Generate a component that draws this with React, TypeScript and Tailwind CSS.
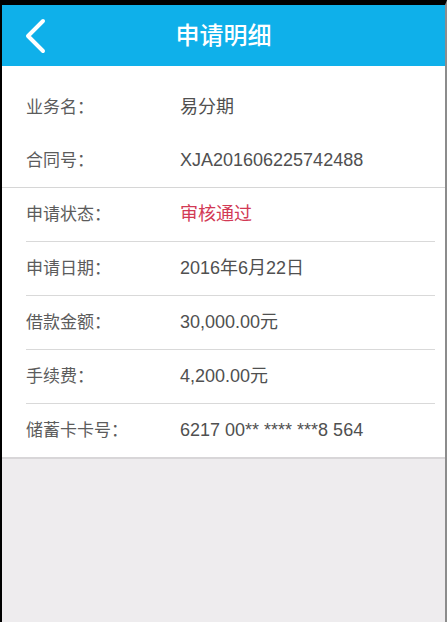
type Row = { label: string; value: string; red?: boolean };

const topRows: Row[] = [
  { label: "业务名：", value: "易分期" },
  { label: "合同号：", value: "XJA201606225742488" },
];

const rows: Row[] = [
  { label: "申请状态：", value: "审核通过", red: true },
  { label: "申请日期：", value: "2016年6月22日" },
  { label: "借款金额：", value: "30,000.00元" },
  { label: "手续费：", value: "4,200.00元" },
  { label: "储蓄卡卡号：", value: "6217 00** **** ***8 564" },
];

function InfoRow({ row }: { row: Row }) {
  return (
    <div className="flex h-[53px] items-center">
      <span className="w-[154px] shrink-0 text-[17px] text-[#5c5c5c]">{row.label}</span>
      <span className={`text-[18px] ${row.red ? "text-[#d23a55]" : "text-[#505050]"}`}>
        {row.value}
      </span>
    </div>
  );
}

export default function App() {
  return (
    <div
      className="flex h-[622px] w-[447px] flex-col border-t-[5px] border-l-2 border-r-2 border-t-black border-l-black border-r-[#8c8c8c] bg-[#eeecee]"
      style={{ fontFamily: '"Liberation Sans", "Noto Sans CJK SC", sans-serif' }}
    >
      {/* Header */}
      <div className="relative flex h-[61px] shrink-0 items-center justify-center bg-[#0fb0ea]">
        <svg
          className="absolute left-[21px] top-[13px]"
          width="26"
          height="36"
          viewBox="0 0 26 36"
          fill="none"
          stroke="white"
          strokeWidth="4"
          strokeLinecap="round"
          strokeLinejoin="round"
        >
          <polyline points="20,3 5,18 20,33" />
        </svg>
        <h1 className="text-[24px] font-medium text-white">申请明细</h1>
      </div>

      {/* Details */}
      <div className="bg-white pt-[15px]">
        <div className="pl-[24px]">
          {topRows.map((r) => (
            <InfoRow key={r.label} row={r} />
          ))}
        </div>
        <div className="h-px bg-[#d6d6d6]" />
        <div className="pl-[24px] pr-[10px]">
          {rows.map((r, i) => (
            <div key={r.label}>
              {i > 0 && <div className="h-px bg-[#d9d9d9]" />}
              <InfoRow row={r} />
            </div>
          ))}
        </div>
      </div>
      <div className="h-[2px] bg-[#d8d6d8]" />
    </div>
  );
}
